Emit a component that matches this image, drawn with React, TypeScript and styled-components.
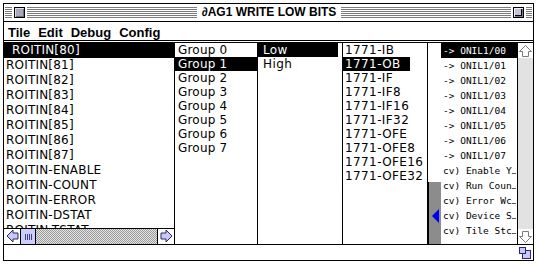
import styled, { createGlobalStyle } from 'styled-components';

const GlobalStyle = createGlobalStyle`
  html, body {
    margin: 0;
    background: #fff;
  }
  body {
    font-family: "DejaVu Sans", sans-serif;
    color: #000;
  }
`;

const Window = styled.div`
  margin: 3px 0 0 3px;
  width: 529px;
  border: 1px solid #000;
  background: #fff;
`;

const TitleBar = styled.div`
  height: 17px;
  display: flex;
  align-items: center;
  padding: 0 1px;
  border-bottom: 1px solid #000;
`;

const Stripes = styled.div<{ $w?: number }>`
  flex: ${({ $w }) => ($w ? `0 0 ${$w}px` : '1 1 0')};
  height: 11px;
  background: repeating-linear-gradient(to bottom, #7b7b7b 0 1px, #fff 1px 2px);
`;

const CloseBox = styled.div`
  width: 11px;
  height: 11px;
  margin: 0 2px;
  box-sizing: border-box;
  border: 1px solid #000;
  background: #a8a8bc;
  box-shadow: inset 1px 1px 0 #dcdcec, inset -1px -1px 0 #6e6e84;
`;

const ZoomBox = styled(CloseBox)`
  position: relative;
  background: #c4c4d8;
  box-shadow: inset 1px 1px 0 #eeeef8, inset -1px -1px 0 #7a7a90;
`;

const ZoomInner = styled.div`
  position: absolute;
  left: 1px;
  top: 1px;
  width: 6px;
  height: 6px;
  border-right: 1px solid #000;
  border-bottom: 1px solid #000;
`;

const Title = styled.div`
  padding: 0 5px;
  font-family: "Liberation Sans", Arial, sans-serif;
  font-weight: bold;
  font-size: 12px;
  line-height: 17px;
  white-space: nowrap;
`;

const MenuBar = styled.div`
  height: 19px;
  display: flex;
  gap: 8px;
  padding: 1px 0 0 4px;
  box-sizing: border-box;
  border-bottom: 1px solid #000;
  font-family: "Liberation Sans", Arial, sans-serif;
  font-weight: bold;
  font-size: 13px;
  line-height: 19px;
`;

const Panes = styled.div`
  margin-top: 1px;
  height: 201px;
  display: flex;
  border-top: 1px solid #000;
  border-bottom: 1px solid #000;
`;

const Pane = styled.div<{ $w: number; $edge?: boolean }>`
  flex: 0 0 ${({ $w }) => $w}px;
  display: flex;
  flex-direction: column;
  overflow: hidden;
  border-right: ${({ $edge }) => ($edge ? '1px solid #000' : 'none')};
`;

const Rows = styled.div<{ $font: string; $size: number; $spacing?: number }>`
  flex: 1 1 0;
  overflow: hidden;
  font-family: ${({ $font }) => $font};
  font-size: ${({ $size }) => $size}px;
  letter-spacing: ${({ $spacing }) => $spacing ?? 0}px;
`;

const Item = styled.div<{ $h: number; $pad: number; $sel?: boolean; $trail?: number }>`
  height: ${({ $h }) => $h}px;
  line-height: ${({ $h }) => $h}px;
  padding-left: ${({ $pad }) => $pad}px;
  margin-right: ${({ $trail }) => $trail ?? 0}px;
  white-space: nowrap;
  overflow: hidden;
  background: ${({ $sel }) => ($sel ? '#000' : 'transparent')};
  color: ${({ $sel }) => ($sel ? '#fff' : '#000')};
`;

const Chip = styled.span<{ $sel?: boolean }>`
  display: inline-block;
  padding: 0 9px 0 2px;
  background: ${({ $sel }) => ($sel ? '#000' : 'transparent')};
  color: ${({ $sel }) => ($sel ? '#fff' : '#000')};
`;

const Dots = styled.span`
  font-size: 7px;
  letter-spacing: -1px;
`;

const HScroll = styled.div`
  height: 15px;
  display: flex;
  border-top: 1px solid #000;
`;

const ArrowCell = styled.div`
  flex: 0 0 auto;
  display: flex;
  align-items: center;
  justify-content: center;
  background: #fff;
`;

const HArrowCell = styled(ArrowCell)<{ $side: 'left' | 'right' }>`
  width: 16px;
  border-left: ${({ $side }) => ($side === 'right' ? '1px solid #000' : 'none')};
  border-right: ${({ $side }) => ($side === 'left' ? '1px solid #000' : 'none')};
`;

const Thumb = styled.div`
  flex: 0 0 15px;
  display: flex;
  align-items: center;
  justify-content: center;
  background: #ccccff;
  border-right: 1px solid #000;
  box-sizing: border-box;
`;

const Grip = styled.div`
  width: 7px;
  height: 6px;
  background: repeating-linear-gradient(to right, #44447a 0 1px, transparent 1px 2px);
`;

const DottedTrack = styled.div`
  flex: 1 1 0;
  background: repeating-conic-gradient(#9a9a9a 0 25%, #e4e4e4 0 50%) 0 0 / 2px 2px;
`;

const Spacer = styled.div`
  flex: 1 1 0;
`;

const Gutter = styled.div`
  height: 62px;
  display: flex;
  align-items: center;
  justify-content: flex-end;
  padding: 5px 2px 0 0;
  box-sizing: border-box;
  background: #8c8c8c;
  border-left: 1px solid #000;
`;

const VScroll = styled.div`
  flex: 0 0 15px;
  display: flex;
  flex-direction: column;
`;

const VArrowCell = styled(ArrowCell)`
  height: 15px;
`;

const VTrack = styled.div`
  flex: 1 1 0;
  background: #e2e2e2;
`;

const Footer = styled.div`
  height: 15px;
  display: flex;
  align-items: center;
  justify-content: flex-end;
  padding-right: 2px;
`;

const roitin = [
  'ROITIN[80]',
  'ROITIN[81]',
  'ROITIN[82]',
  'ROITIN[83]',
  'ROITIN[84]',
  'ROITIN[85]',
  'ROITIN[86]',
  'ROITIN[87]',
  'ROITIN-ENABLE',
  'ROITIN-COUNT',
  'ROITIN-ERROR',
  'ROITIN-DSTAT',
  'ROITIN-TSTAT',
];

const groups = ['Group 0', 'Group 1', 'Group 2', 'Group 3', 'Group 4', 'Group 5', 'Group 6', 'Group 7'];

const modules = [
  '1771-IB',
  '1771-OB',
  '1771-IF',
  '1771-IF8',
  '1771-IF16',
  '1771-IF32',
  '1771-OFE',
  '1771-OFE8',
  '1771-OFE16',
  '1771-OFE32',
];

// truncated entries keep their clipped text, the ellipsis is drawn narrow
const points: { text: string; cut?: boolean }[] = [
  { text: '-> ONIL1/00' },
  { text: '-> ONIL1/01' },
  { text: '-> ONIL1/02' },
  { text: '-> ONIL1/03' },
  { text: '-> ONIL1/04' },
  { text: '-> ONIL1/05' },
  { text: '-> ONIL1/06' },
  { text: '-> ONIL1/07' },
  { text: 'cv) Enable Y', cut: true },
  { text: 'cv) Run Coun', cut: true },
  { text: 'cv) Error Wc', cut: true },
  { text: 'cv) Device S', cut: true },
  { text: 'cv) Tile Stc', cut: true },
];

function SideArrow({ dir }: { dir: 'left' | 'right' }) {
  const pts = dir === 'left' ? '1,6 7,0 7,3 12,3 12,9 7,9 7,12' : '12,6 6,0 6,3 1,3 1,9 6,9 6,12';
  return (
    <svg width="13" height="13" viewBox="0 0 13 13">
      <polygon points={pts} fill="#c8c8ff" stroke="#2a2a55" strokeWidth="1" />
    </svg>
  );
}

function HollowArrow({ dir }: { dir: 'up' | 'down' }) {
  const pts =
    dir === 'up'
      ? '6.5,0.5 12.5,6.5 9.5,6.5 9.5,11.5 3.5,11.5 3.5,6.5 0.5,6.5'
      : '6.5,11.5 12.5,5.5 9.5,5.5 9.5,0.5 3.5,0.5 3.5,5.5 0.5,5.5';
  return (
    <svg width="13" height="12" viewBox="0 0 13 12">
      <polygon points={pts} fill="#fff" stroke="#7c7c7c" strokeWidth="1" />
    </svg>
  );
}

function GrowIcon() {
  return (
    <svg width="12" height="12" viewBox="0 0 12 12">
      <rect x="3.5" y="3.5" width="8" height="8" fill="#c8c8ff" stroke="#2a2a66" />
      <rect x="0.5" y="0.5" width="6" height="6" fill="#c8c8ff" stroke="#2a2a66" />
    </svg>
  );
}

export default function App() {
  return (
    <>
      <GlobalStyle />
      <Window>
        <TitleBar>
          <Stripes $w={7} />
          <CloseBox />
          <Stripes />
          <Title>∂AG1 WRITE LOW BITS</Title>
          <Stripes />
          <ZoomBox>
            <ZoomInner />
          </ZoomBox>
          <Stripes $w={6} />
        </TitleBar>

        <MenuBar>
          <span>Tile</span>
          <span>Edit</span>
          <span>Debug</span>
          <span>Config</span>
        </MenuBar>

        <Panes>
          <Pane $w={170} $edge>
            <Rows $font={'"DejaVu Sans", sans-serif'} $size={12} $spacing={0.2}>
              {roitin.map((name, i) => (
                <Item key={name} $h={15} $pad={i === 0 ? 8 : 2} $sel={i === 0}>
                  {name}
                </Item>
              ))}
            </Rows>
            <HScroll>
              <HArrowCell $side="left">
                <SideArrow dir="left" />
              </HArrowCell>
              <Thumb>
                <Grip />
              </Thumb>
              <DottedTrack />
              <HArrowCell $side="right">
                <SideArrow dir="right" />
              </HArrowCell>
            </HScroll>
          </Pane>

          <Pane $w={82} $edge>
            <Rows $font={'"DejaVu Sans", sans-serif'} $size={12} $spacing={0.2}>
              {groups.map((g, i) => (
                <Item key={g} $h={14} $pad={3} $sel={i === 1}>
                  {g}
                </Item>
              ))}
            </Rows>
          </Pane>

          <Pane $w={84} $edge>
            <Rows $font={'"DejaVu Sans", sans-serif'} $size={12} $spacing={0.4}>
              {['Low', 'High'].map((b, i) => (
                <Item key={b} $h={14} $pad={5} $trail={4} $sel={i === 0}>
                  {b}
                </Item>
              ))}
            </Rows>
          </Pane>

          <Pane $w={84} $edge>
            <Rows $font={'"DejaVu Sans", sans-serif'} $size={12} $spacing={0.4}>
              {modules.map((m, i) => (
                <Item key={m} $h={14} $pad={0}>
                  <Chip $sel={i === 1}>{m}</Chip>
                </Item>
              ))}
            </Rows>
          </Pane>

          <Pane $w={13}>
            <Spacer />
            <Gutter>
              <svg width="7" height="14" viewBox="0 0 7 14">
                <polygon points="7,0 0,7 7,14" fill="#0000ee" />
              </svg>
            </Gutter>
          </Pane>

          <Pane $w={76} $edge>
            <Rows $font={'"DejaVu Sans Mono", monospace'} $size={9.5}>
              {points.map((p, i) => (
                <Item key={p.text} $h={15} $pad={2} $sel={i === 0}>
                  {p.text}
                  {p.cut && <Dots>…</Dots>}
                </Item>
              ))}
            </Rows>
          </Pane>

          <VScroll>
            <VArrowCell>
              <HollowArrow dir="up" />
            </VArrowCell>
            <VTrack />
            <VArrowCell>
              <HollowArrow dir="down" />
            </VArrowCell>
          </VScroll>
        </Panes>

        <Footer>
          <GrowIcon />
        </Footer>
      </Window>
    </>
  );
}
